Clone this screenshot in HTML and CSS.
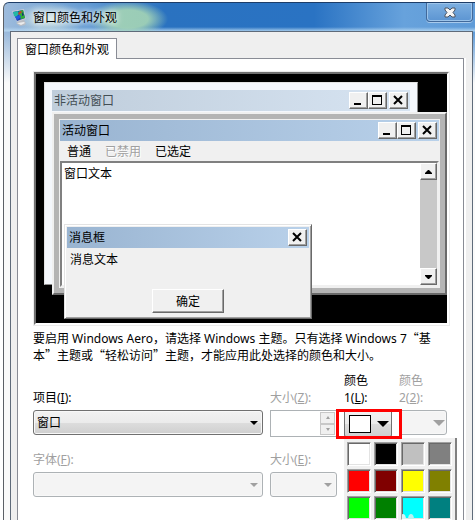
FILE: index.html
```html
<!DOCTYPE html>
<html lang="zh-CN">
  <head>
    <meta charset="UTF-8" />
    <title>窗口颜色和外观</title>
    <link rel="stylesheet" href="styles.css">
  </head>

  <body>
    <div class="dialog">
      <div class="titlebar">
        <svg class="app-icon" width="16" height="18" viewBox="0 0 16 18">
          <path d="M6 12l6-1 1 3 1 1-1 2-5 1-4-3 2-1z" fill="#b9bcc2" />
          <path d="M5 15l7-1 1 1-4 2z" fill="#ececec" />
          <path d="M0 3l12-2 2 10-9 3z" fill="#c6cbd6" />
          <path d="M1 4l10-2 2 8-8 3z" fill="#1c3fae" />
          <path d="M1 4l5-1 1 3-3 3-2-1z" fill="#23b8a4" />
          <path d="M7 3l4-1 2 8-4 1-2-3z" fill="#2fae35" />
          <path d="M3 9l5-2 1 2-4 3z" fill="#2457e0" />
          <path d="M6 5l3-2 1 1-3 3z" fill="#c93a2c" />
          <path d="M10 4l2 3-2 1z" fill="#16307c" />
        </svg>
        <span class="titlebar-text">窗口颜色和外观</span>
        <button class="close-btn" type="button" aria-label="关闭">
          <svg width="12" height="11" viewBox="0 0 12 11">
            <path d="M1 1h3l2 2 2-2h3v2L9 5.500l2 2.500v2H8L6 8l-2 2H1V8l2-2.500L1 3z" fill="#f6f6f6" stroke="#4d5563" />
          </svg>
        </button>
      </div>

      <div class="client">
        <button class="tab" type="button">窗口颜色和外观</button>
        <div class="tab-page">
          <div class="preview">
            <div class="desktop">
              <div class="win win-inactive">
                <div class="caption">
                  <span>非活动窗口</span>
                  <button class="box-btn" type="button" aria-label="最小化">
                    <svg width="11" height="11"><path d="M1 8h7v2H1z" /></svg>
                  </button>
                  <button class="box-btn" type="button" aria-label="最大化">
                    <svg width="11" height="11"><path d="M0 0h10v10H0zM1 2v7h8V2z" fill-rule="evenodd" /></svg>
                  </button>
                  <button class="box-btn box-close" type="button" aria-label="关闭">
                    <svg width="11" height="11"><path d="M1 1l8 8M9 1l-8 8" stroke="#000" stroke-width="2" /></svg>
                  </button>
                </div>
              </div>

              <div class="win win-active">
                <div class="win-inner">
                  <div class="caption">
                    <span>活动窗口</span>
                    <button class="box-btn" type="button" aria-label="最小化">
                      <svg width="11" height="11"><path d="M1 8h7v2H1z" /></svg>
                    </button>
                    <button class="box-btn" type="button" aria-label="最大化">
                      <svg width="11" height="11"><path d="M0 0h10v10H0zM1 2v7h8V2z" fill-rule="evenodd" /></svg>
                    </button>
                    <button class="box-btn box-close" type="button" aria-label="关闭">
                      <svg width="11" height="11"><path d="M1 1l8 8M9 1l-8 8" stroke="#000" stroke-width="2" /></svg>
                    </button>
                  </div>
                  <div class="menu">
                    <span>普通</span>
                    <span class="menu-disabled">已禁用</span>
                    <span>已选定</span>
                  </div>
                  <div class="text-area">
                    <span class="text-area-label">窗口文本</span>
                    <div class="scrollbar">
                      <button class="box-btn" type="button" aria-label="向上">
                        <svg width="7" height="4"><path d="M3 0h1l3 3v1H0V3z" /></svg>
                      </button>
                      <button class="box-btn" type="button" aria-label="向下">
                        <svg width="7" height="4"><path d="M0 0h7v1L4 4H3L0 1z" /></svg>
                      </button>
                    </div>
                  </div>
                </div>
              </div>

              <div class="win win-message">
                <div class="caption">
                  <span>消息框</span>
                  <button class="box-btn box-close" type="button" aria-label="关闭">
                    <svg width="11" height="11"><path d="M1 1l8 8M9 1l-8 8" stroke="#000" stroke-width="2" /></svg>
                  </button>
                </div>
                <p class="message-text">消息文本</p>
                <button class="ok-btn" type="button">确定</button>
              </div>
            </div>
          </div>

          <p class="hint">要启用 Windows Aero，请选择 Windows 主题。只有选择 Windows 7<span class="quote">“</span>基<br />本<span class="quote">”</span>主题或<span class="quote">“</span>轻松访问<span class="quote">”</span>主题，才能应用此处选择的颜色和大小。</p>

          <div class="fields">
            <label for="item">项目(<u>I</u>):</label>
            <label for="size" class="off">大小(<u>Z</u>):</label>
            <label for="color1">颜色<br />1(<u>L</u>):</label>
            <label for="color2" class="off">颜色<br />2(<u>2</u>):</label>

            <div class="select">
              <select id="item">
                <option>窗口</option>
              </select>
            </div>
            <div class="spinner">
              <input type="text" id="size" disabled />
              <button type="button" aria-label="增大" disabled><span class="arrow-up"></span></button>
              <button type="button" aria-label="减小" disabled><span class="arrow-down"></span></button>
            </div>
            <div class="color-picker">
              <button class="color-btn" id="color1" type="button">
                <span class="color-value"></span>
                <span class="color-arrow"></span>
              </button>
              <div class="palette">
                <button class="swatch white" type="button" aria-label="白色"></button>
                <button class="swatch black" type="button" aria-label="黑色"></button>
                <button class="swatch silver" type="button" aria-label="银色"></button>
                <button class="swatch gray" type="button" aria-label="灰色"></button>
                <button class="swatch red" type="button" aria-label="红色"></button>
                <button class="swatch maroon" type="button" aria-label="褐红色"></button>
                <button class="swatch yellow" type="button" aria-label="黄色"></button>
                <button class="swatch olive" type="button" aria-label="橄榄色"></button>
                <button class="swatch lime" type="button" aria-label="鲜绿色"></button>
                <button class="swatch green" type="button" aria-label="绿色"></button>
                <button class="swatch aqua" type="button" aria-label="青色">
                  <svg width="22" height="22" viewBox="0 0 22 22">
                    <ellipse cx="1" cy="22" rx="3" ry="5" fill="#d9f4f4" />
                    <ellipse cx="9" cy="22" rx="3" ry="5" fill="#b9f2f2" />
                  </svg>
                </button>
                <button class="swatch teal" type="button" aria-label="蓝绿色"></button>
              </div>
              <div class="highlight"></div>
            </div>
            <div class="select select-color">
              <select id="color2" disabled></select>
            </div>
          </div>

          <div class="fields fields-font">
            <label for="font" class="off">字体(<u>F</u>):</label>
            <label for="font-size" class="off">大小(<u>E</u>):</label>
            <div class="select row-start">
              <select id="font" disabled></select>
            </div>
            <div class="select">
              <select id="font-size" disabled></select>
            </div>
          </div>
        </div>
      </div>
    </div>
  </body>
</html>
```

FILE: styles.css
```css
*,
*:before,
*:after {
  box-sizing: border-box;
}

body {
  font-family: "Noto Sans", "Noto Sans CJK SC", sans-serif;
  font-size: 12px;
  line-height: 17px;
  margin: 0;
  padding: 2px 0 0 3px;
  height: 100vh;
  overflow: hidden;
  background-color: #fff;
  color: #000;
}

button,
input,
select {
  font: inherit;
  color: inherit;
  margin: 0;
  padding: 0;
}

svg {
  display: block;
}

/* Dialog frame */
.dialog {
  display: flex;
  flex-direction: column;
  height: 100%;
  padding: 0 2px 0 6px;
  border-top: 1px solid #1d3d68;
  border-left: 1px solid #5c6066;
  border-top-left-radius: 6px;
  background:
    radial-gradient(ellipse 36px 16px at 46px 16px, rgba(222, 238, 226, 0.9), transparent),
    radial-gradient(ellipse 40px 18px at 124px 16px, rgba(165, 213, 181, 0.9) 50%, transparent),
    linear-gradient(to bottom, transparent 24px, rgba(190, 222, 245, 0.8) 28px, transparent 29px),
    linear-gradient(to bottom, transparent 30px, #fafafa 80px),
    linear-gradient(to right, #9dbbdc, #5d97d2 90px, #2a72c0 160px, #2a73c3 310px, #67a2dc 400px, #5f9bd8);
}

.titlebar {
  display: flex;
  align-items: center;
  height: 28px;
  flex: none;
  padding-left: 2px;
}

.app-icon {
  margin-right: 5px;
}

.titlebar-text {
  flex: 1;
  text-shadow: 0 0 6px #fff, 0 0 8px #fff;
}

.close-btn {
  display: flex;
  justify-content: center;
  align-items: center;
  align-self: flex-start;
  width: 47px;
  height: 19px;
  border: 1px solid #41699b;
  border-top: none;
  border-radius: 0 0 4px 4px;
  background: linear-gradient(#7db0e1, #5c95d2);
  box-shadow: inset 0 0 0 1px #9cc4ea, 0 1px 0 #a8caec;
}

.client {
  flex: 1;
  display: flex;
  flex-direction: column;
  align-items: stretch;
  padding: 6px 8px 0 6px;
  border: 1px solid #5f6b7a;
  border-bottom: none;
  background-color: #efefef;
}

.tab {
  align-self: flex-start;
  position: relative;
  z-index: 1;
  height: 21px;
  padding: 0 7px;
  margin-bottom: -1px;
  border: 1px solid #898c95;
  border-bottom: none;
  background-color: #fff;
}

.tab-page {
  flex: 1;
  padding: 12px 13px 0 15px;
  border: 1px solid #898c95;
  border-bottom: none;
  background-color: #fff;
  box-shadow: 2px 0 0 #fff;
}

/* Preview */
.preview {
  border: 1px solid #ececec;
}

.desktop {
  position: relative;
  height: 253px;
  border: 2px solid #707070;
  border-right-color: #fff;
  border-bottom-color: #fff;
  background-color: #000;
}

.win {
  position: absolute;
}

.win-inactive {
  left: 8px;
  top: 8px;
  right: 29px;
  bottom: 38px;
  padding: 7px;
  border: 1px solid #e3e3e3;
  border-right-color: #8a8a8a;
  border-bottom-color: #8a8a8a;
  background-color: #f4f7fc;
}

.win-active {
  left: 16px;
  top: 38px;
  right: 0;
  bottom: 28px;
  padding: 5px;
  border: 2px solid #e3e3e3;
  border-color: #f0f0f0 #696969 #696969 #f0f0f0;
  background-color: #b4b4b4;
}

.win-inner {
  display: flex;
  flex-direction: column;
  height: 100%;
  padding: 1px;
  background-color: #f0f0f0;
}

.win-message {
  left: 28px;
  top: 150px;
  width: 248px;
  height: 95px;
  padding: 2px;
  display: flex;
  flex-direction: column;
  border: 1px solid #e3e3e3;
  border-right-color: #696969;
  border-bottom-color: #696969;
  background-color: #f0f0f0;
  box-shadow: inset 1px 1px 0 #fff, inset -1px -1px 0 #a0a0a0;
}

.caption {
  display: flex;
  align-items: center;
  flex: none;
  height: 21px;
  padding: 0 2px;
  background: linear-gradient(to right, #99b4d1, #b9d1ea);
}

.caption span {
  flex: 1;
}

.win-inactive .caption {
  background: linear-gradient(to right, #bfcddb, #d7e4f2);
  color: #434e54;
}

.box-btn {
  display: flex;
  justify-content: center;
  align-items: center;
  width: 19px;
  height: 17px;
  border: 1px solid #fff;
  border-right-color: #696969;
  border-bottom-color: #696969;
  background-color: #f0f0f0;
  box-shadow: inset -1px -1px 0 #a0a0a0;
}

.box-close {
  margin-left: 2px;
}

.menu {
  display: flex;
  align-items: center;
  gap: 14px;
  height: 20px;
  padding-left: 7px;
}

.menu-disabled {
  color: #a0a0a0;
  text-shadow: 1px 1px 0 #fff;
}

.text-area {
  flex: 1;
  display: flex;
  justify-content: space-between;
  border: 2px solid #696969;
  border-color: #808080 #f0f0f0 #f0f0f0 #808080;
  background-color: #fff;
}

.text-area-label {
  padding: 2px;
}

.scrollbar {
  display: flex;
  flex-direction: column;
  justify-content: space-between;
  width: 17px;
  background-color: #c8c8c8;
}

.scrollbar .box-btn {
  width: 17px;
}

.message-text {
  margin: 3px;
  flex: 1;
}

.ok-btn {
  align-self: center;
  width: 72px;
  height: 24px;
  margin-bottom: 3px;
  border: 1px solid #fff;
  border-right-color: #696969;
  border-bottom-color: #696969;
  background-color: #f0f0f0;
  box-shadow: inset -1px -1px 0 #a0a0a0;
}

.hint {
  margin: 4px 0 8px;
}

/* full-width quotation marks */
.quote {
  font-family: "Noto Sans CJK SC", sans-serif;
  line-height: 1;
}

/* Fields */
.fields {
  display: grid;
  grid-template-columns: 1fr 67px 48px 48px;
  gap: 4px 7px;
  align-items: end;
  padding-right: 3px;
}

.fields-font {
  margin-top: 14px;
}

.row-start {
  grid-column-start: 1;
}

.off {
  color: #a0a0a0;
}

.select {
  display: grid;
  align-self: start;
  align-items: center;
}

.select select {
  grid-area: 1 / 1;
  appearance: none;
  width: 100%;
  height: 25px;
  padding-left: 3px;
  border: 1px solid #707070;
  border-radius: 3px;
  background: linear-gradient(#f2f2f2, #ebebeb 50%, #dddddd 51%, #cfcfcf);
  box-shadow: inset 0 0 0 1px #f8f8f8;
}

.select select:disabled {
  border-color: #adb2b5;
  background: #f4f4f4;
  opacity: 1;
}

.select:after {
  content: "";
  grid-area: 1 / 1;
  justify-self: end;
  margin-right: 5px;
  border: 4px solid transparent;
  border-top-color: #000;
  border-bottom: none;
  pointer-events: none;
}

.select:has(select:disabled):after {
  border-top-color: #a0a0a0;
}

.select-color:after {
  margin-right: 2px;
  border-width: 6px 6px 0;
}

.spinner {
  display: grid;
  grid-template-columns: 1fr 15px;
  grid-template-rows: 1fr 1fr;
  height: 27px;
  padding: 1px;
  border: 1px solid #adb2b5;
  background-color: #fff;
}

.spinner input {
  grid-row: 1 / 3;
  width: 100%;
  border: none;
  background-color: #fff;
}

.spinner button {
  display: flex;
  justify-content: center;
  align-items: center;
  border: 1px solid #c8c8c8;
  background-color: #f0f0f0;
}

.arrow-up,
.arrow-down {
  border: 2px solid transparent;
}

.arrow-up {
  border-bottom: 3px solid #a0a0a0;
  border-top: none;
}

.arrow-down {
  border-top: 3px solid #a0a0a0;
  border-bottom: none;
}

.color-picker {
  position: relative;
  align-self: start;
}

.color-btn {
  display: flex;
  align-items: center;
  justify-content: space-between;
  width: 100%;
  height: 27px;
  padding: 0 2px 0 4px;
  border: 1px solid #707070;
  border-radius: 2px;
  background: linear-gradient(#f2f2f2, #ebebeb 50%, #dddddd 51%, #cfcfcf);
}

.color-value {
  width: 22px;
  height: 18px;
  border: 1px solid #000;
  background-color: #fff;
}

.color-arrow {
  border: 6px solid transparent;
  border-top-color: #000;
  border-bottom: none;
}

.highlight {
  position: absolute;
  top: -1px;
  left: -8px;
  right: -10px;
  height: 30px;
  border: 3px solid #f00;
  pointer-events: none;
}

.palette {
  position: absolute;
  top: 28px;
  left: 0;
  display: grid;
  grid-template-columns: repeat(4, 24px);
  gap: 3px;
  padding: 4px 3px;
  border-right: 2px solid #808080;
  background-color: #f0f0f0;
}

.swatch {
  height: 24px;
  overflow: hidden;
  border: 1px solid #a0a0a0;
  border-right-color: #fff;
  border-bottom-color: #fff;
  box-shadow: inset 1px 1px 0 #696969, inset -1px -1px 0 #e3e3e3;
}

.white {
  background-color: #fff;
}

.black {
  background-color: #000;
}

.silver {
  background-color: #c0c0c0;
}

.gray {
  background-color: #808080;
}

.red {
  background-color: #f00;
}

.maroon {
  background-color: #800000;
}

.yellow {
  background-color: #ff0;
}

.olive {
  background-color: #808000;
}

.lime {
  background-color: #0f0;
}

.green {
  background-color: #008000;
}

.aqua {
  background-color: #0ff;
}

.teal {
  background-color: #008080;
}
```
